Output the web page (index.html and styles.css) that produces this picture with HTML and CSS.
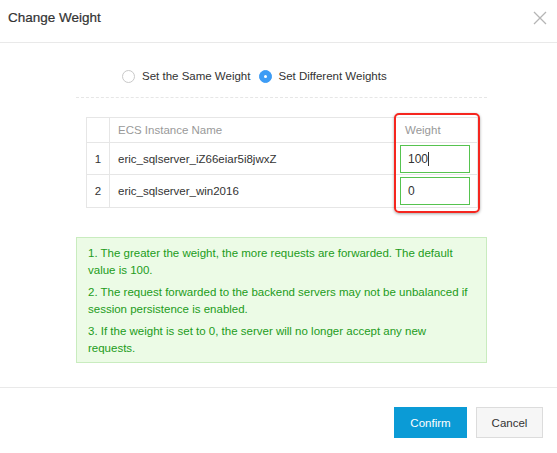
FILE: index.html
```html
<!DOCTYPE html>
<html lang="en">
<head>
    <meta charset="UTF-8">
    <meta name="viewport" content="width=device-width, initial-scale=1.0">
    <title>Change Weight</title>
    <link rel="stylesheet" href="styles.css">
</head>
<body>

<div class="dialog">
    <div class="dialog-header">
        <h1 class="dialog-title">Change Weight</h1>
        <button class="close-btn" aria-label="Close">
            <svg width="14" height="14" viewBox="0 0 14 14">
                <path d="M1 1 L13 13 M13 1 L1 13" stroke="#b5b5b5" stroke-width="1.3" fill="none"/>
            </svg>
        </button>
    </div>

    <div class="dialog-body">
        <div class="radio-group">
            <label class="radio">
                <span class="radio-dot"></span>
                Set the Same Weight
            </label>
            <label class="radio checked">
                <span class="radio-dot"></span>
                Set Different Weights
            </label>
        </div>

        <div class="table-wrap">
            <table class="weight-table">
                <thead>
                    <tr>
                        <th class="col-index"></th>
                        <th class="col-name">ECS Instance Name</th>
                        <th class="col-weight">Weight</th>
                    </tr>
                </thead>
                <tbody>
                    <tr class="row-first">
                        <td class="col-index">1</td>
                        <td class="col-name">eric_sqlserver_iZ66eiar5i8jwxZ</td>
                        <td class="col-weight"><span class="weight-input">100<span class="caret"></span></span></td>
                    </tr>
                    <tr class="row-second">
                        <td class="col-index">2</td>
                        <td class="col-name">eric_sqlserver_win2016</td>
                        <td class="col-weight"><span class="weight-input">0</span></td>
                    </tr>
                </tbody>
            </table>
            <div class="highlight"></div>
        </div>

        <div class="tips">
            <p>1. The greater the weight, the more requests are forwarded. The default value is 100.</p>
            <p>2. The request forwarded to the backend servers may not be unbalanced if session persistence is enabled.</p>
            <p>3. If the weight is set to 0, the server will no longer accept any new requests.</p>
        </div>
    </div>

    <div class="dialog-footer">
        <button class="btn btn-primary">Confirm</button>
        <button class="btn btn-default">Cancel</button>
    </div>
</div>

</body>
</html>
```

FILE: styles.css
```css
body {
    margin: 0;
    font-family: "Liberation Sans", Arial, sans-serif;
    font-size: 11.5px;
    color: #333;
    background-color: #fff;
}
.dialog {
    width: 557px;
    height: 453px;
    background-color: #fff;
}
.dialog-header {
    display: flex;
    justify-content: space-between;
    align-items: flex-start;
    height: 43px;
    box-sizing: border-box;
    padding: 10px 10px 0 8px;
    border-bottom: 1px solid #e9e9e9;
}
.dialog-title {
    margin: 0;
    font-size: 13.5px;
    line-height: 16px;
    font-weight: normal;
    color: #333;
    -webkit-text-stroke: 0.2px #333;
}
.close-btn {
    border: none;
    background: none;
    padding: 0;
    margin-top: 1px;
    width: 14px;
    height: 14px;
    cursor: pointer;
}
.close-btn svg {
    display: block;
}
.dialog-body {
    padding: 23px 70px 24px 76px;
}
.radio-group {
    display: flex;
    align-items: center;
    height: 20px;
    padding-left: 46px;
    padding-bottom: 11px;
    border-bottom: 1px dashed #e6e6e6;
}
.radio {
    display: flex;
    align-items: center;
    line-height: 20px;
    margin-right: 9px;
    cursor: pointer;
}
.radio-dot {
    width: 13px;
    height: 13px;
    box-sizing: border-box;
    border: 1px solid #c9c9c9;
    border-radius: 50%;
    margin-right: 7px;
    background-color: #fff;
}
.radio.checked .radio-dot {
    border-color: #3d9cf5;
    background-color: #3d9cf5;
    position: relative;
    margin-right: 6px;
}
.radio.checked .radio-dot::after {
    content: "";
    position: absolute;
    left: 4px;
    top: 4px;
    width: 3px;
    height: 3px;
    border-radius: 50%;
    background-color: #fff;
}
.table-wrap {
    position: relative;
    width: 392px;
    margin: 19px 0 0 10px;
}
.weight-table {
    width: 100%;
    border-collapse: collapse;
    border: 1px solid #e6e6e6;
}
.weight-table th,
.weight-table td {
    border: 1px solid #e6e6e6;
    text-align: left;
    font-weight: normal;
    padding: 0 0 0 8px;
    vertical-align: middle;
}
.weight-table th {
    height: 24px;
    color: #999;
}
.weight-table .row-first td {
    height: 31px;
}
.weight-table .row-second td {
    height: 32px;
}
.weight-table .col-index {
    width: 22px;
    padding: 0;
    text-align: center;
}
.weight-table th.col-weight {
    width: 72px;
    padding-left: 10px;
}
.weight-table td.col-weight {
    padding-left: 5px;
}
.weight-input {
    display: block;
    width: 70px;
    height: 28px;
    box-sizing: border-box;
    border: 1px solid #56c34f;
    padding-left: 7px;
    line-height: 26px;
    font-size: 12px;
    color: #333;
}
.caret {
    display: inline-block;
    width: 1px;
    height: 14px;
    background-color: #333;
    vertical-align: -3px;
}
.highlight {
    position: absolute;
    left: 308px;
    top: -4px;
    width: 86px;
    height: 100px;
    box-sizing: border-box;
    border: 2px solid #f5261f;
    border-radius: 5px;
    box-shadow: 0 1px 3px rgba(0, 0, 0, 0.35);
}
.tips {
    margin-top: 29px;
    padding: 7px 11px 6px;
    background-color: #ecfbe6;
    border: 1px solid #c9ecbf;
    color: #229c20;
}
.tips p {
    margin: 0 0 6px 0;
    line-height: 16.5px;
}
.tips p:last-child {
    margin-bottom: 0;
}
.dialog-footer {
    display: flex;
    justify-content: flex-end;
    gap: 9px;
    padding: 19px 14px 0 0;
    border-top: 1px solid #e9e9e9;
}
.btn {
    height: 31px;
    font-family: inherit;
    font-size: 11.5px;
    cursor: pointer;
}
.btn-primary {
    width: 73px;
    border: 1px solid #0b9bd6;
    background-color: #0b9bd6;
    color: #fff;
}
.btn-default {
    width: 67px;
    border: 1px solid #dcdcdc;
    background-color: #f6f6f6;
    color: #333;
}
```
